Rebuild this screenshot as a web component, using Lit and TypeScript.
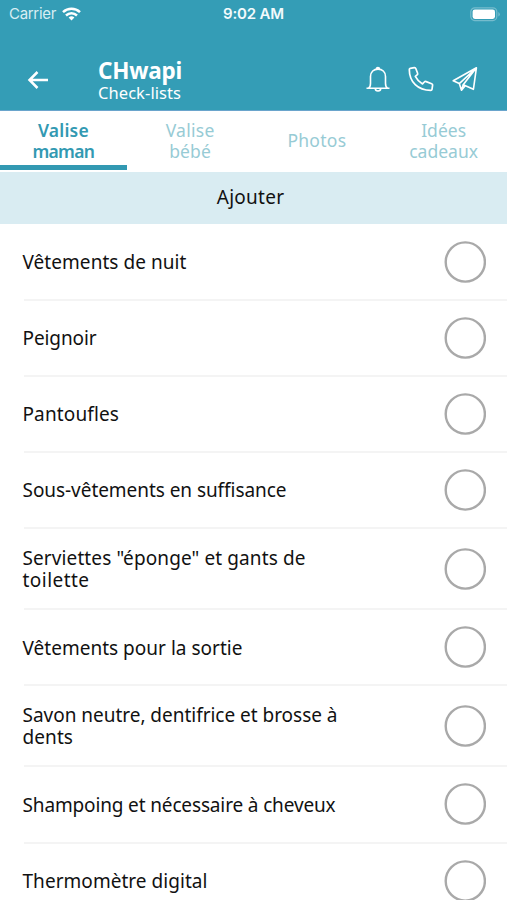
import { LitElement, html, css } from "lit";
import { customElement, property } from "lit/decorators.js";

/** A line of text whose tracking is adjusted so it spans a given width. */
@customElement("fit-text")
class FitText extends LitElement {
  @property() text = "";
  @property({ type: Number }) span = 0;

  static styles = css`
    :host { display: block; white-space: nowrap; }
    .line { display: block; width: max-content; }
  `;

  updated() {
    const line = this.renderRoot.querySelector(".line") as HTMLElement;
    line.style.letterSpacing = "0";
    const natural = line.getBoundingClientRect().width;
    const step = (this.span - natural) / this.text.length;
    line.style.letterSpacing = `${step}px`;
  }

  render() {
    return html`<span class="line">${this.text}</span>`;
  }
}

type Line = [string, number];

const tabs: Line[][] = [
  [["Valise", 51], ["maman", 62]],
  [["Valise", 49], ["bébé", 42]],
  [["Photos", 59]],
  [["Idées", 45], ["cadeaux", 69]],
];

const items: Line[][] = [
  [["Vêtements de nuit", 164]],
  [["Peignoir", 74]],
  [["Pantoufles", 96.5]],
  [["Sous-vêtements en suffisance", 264]],
  [['Serviettes "éponge" et gants de', 283], ["toilette", 67]],
  [["Vêtements pour la sortie", 220]],
  [["Savon neutre, dentifrice et brosse à", 315], ["dents", 50.5]],
  [["Shampoing et nécessaire à cheveux", 313]],
  [["Thermomètre digital", 185]],
];

const lines = (ls: Line[]) => ls.map(([t, w]) => html`<fit-text .text=${t} .span=${w}></fit-text>`);

@customElement("app-root")
class AppRoot extends LitElement {
  static styles = css`
    :host {
      display: block;
      height: 900px;
      overflow: hidden;
      background: #fff;
      color: #111;
      font-family: "Noto Sans", "Open Sans", sans-serif;
    }
    .header {
      box-sizing: border-box;
      height: 111px;
      background: #349db6;
      border-bottom: 1px solid #6aa5cc;
      color: #fff;
    }
    .status {
      display: grid;
      grid-template-columns: 1fr auto 1fr;
      align-items: center;
      height: 28px;
      padding: 0 6px 0 9px;
      font: 15px/28px Inter, sans-serif;
    }
    .carrier { display: flex; align-items: center; gap: 6px; color: #d8eef3; }
    .clock { font-weight: 600; color: #f2fafc; margin-right: 3px; }
    .battery { justify-self: end; }
    svg { display: block; }
    .bar { display: flex; align-items: center; height: 82px; }
    .back { margin: 21px 0 0 27px; width: 71px; }
    .titles { flex: 1; padding-top: 23px; }
    .title { font-weight: 700; font-size: 22.5px; line-height: 24px; }
    .sub { font-size: 16.5px; line-height: 20px; }
    .actions { display: flex; gap: 16px; padding: 20px 28px 0 0; }
    .tabs {
      display: grid;
      grid-template-columns: repeat(4, 1fr);
      height: 61px;
      font-size: 17.5px;
      line-height: 21px;
      color: #97cbd5;
    }
    .tab {
      box-sizing: border-box;
      display: flex;
      flex-direction: column;
      align-items: center;
      justify-content: center;
      padding-top: 5px;
      border-bottom: 5px solid transparent;
      margin-bottom: 2px;
    }
    .tab.active { color: #3299b2; font-weight: 600; border-color: #3299b2; }
    .add {
      display: flex;
      align-items: center;
      justify-content: center;
      box-sizing: border-box;
      height: 52px;
      padding: 0 6px 2px 0;
      background: #d9ecf2;
      font-size: 19px;
    }
    .list { padding-top: 0.6px; }
    .row {
      box-sizing: border-box;
      display: flex;
      align-items: center;
      justify-content: space-between;
      height: 76.1px;
      margin-left: 23.5px;
      padding-right: 21px;
      border-bottom: 2px solid #f4f4f4;
      font-size: 19px;
      line-height: 22px;
    }
    .row.tall { height: 81.2px; }
    .label { margin-left: -1px; padding-top: 1px; }
    .check { width: 42px; height: 42px; }
  `;

  render() {
    return html`
      <div class="header">
        <div class="status">
          <div class="carrier">
            <fit-text .text=${"Carrier"} .span=${47}></fit-text>
            <svg width="19" height="15" viewBox="0 0 19 15" fill="none" stroke="#fff" stroke-width="2.5">
              <path d="M1 5.2C5.8.7 13.200.7 18 5.200" />
              <path d="M4 8.500C7.200 5.500 11.800 5.500 15 8.500" />
              <path d="M6.600 10.400Q9.500 8.200 12.400 10.400L9.500 13.600Z" fill="#fff" stroke="none" />
            </svg>
          </div>
          <div class="clock"><fit-text .text=${"9:02 AM"} .span=${61}></fit-text></div>
          <svg class="battery" width="31" height="15" viewBox="0 0 31 15">
            <rect x=".8" y=".8" width="26" height="12.800" rx="4" fill="none" stroke="#75bccd" stroke-width="1.200" />
            <rect x="2.600" y="2.500" width="22.400" height="9.400" rx="2.300" fill="#fff" />
            <path d="M28.300 5v4.600q1.500-.7 1.500-2.300T28.300 5z" fill="#75bccd" />
          </svg>
        </div>
        <div class="bar">
          <div class="back">
            <svg width="22" height="20" viewBox="0 0 22 20" fill="none" stroke="#fff" stroke-width="2.500">
              <path d="M10.500 2L2.500 10l8 8M2.500 10H21" />
            </svg>
          </div>
          <div class="titles">
            <fit-text class="title" .text=${"CHwapi"} .span=${84}></fit-text>
            <fit-text class="sub" .text=${"Check-lists"} .span=${83}></fit-text>
          </div>
          <div class="actions">
            <svg width="26" height="28" viewBox="0 0 26 28" fill="none" stroke="#fff" stroke-width="1.600">
              <path d="M1.500 23.300h23M3.500 23.300c1.600-1 2-2 2-5V11.500c0-4.800 3.400-7.400 7.500-7.400s7.500 2.600 7.500 7.400v6.800c0 3 .4 4 2 5M11.300 4.200a1.700 1.700 0 0 1 3.400 0M10.300 23.500a2.700 2.500 0 0 0 5.400 0" />
            </svg>
            <svg width="28" height="28" viewBox="0 0 28 28" fill="none" stroke="#fff" stroke-width="1.700" stroke-linejoin="round">
              <path d="M3.200 3.300L7.300 2.700Q8.500 2.600 8.900 3.700L10.600 8.200Q11 9.200 10.100 9.900L8.300 11.400Q10.700 16.200 15.500 18.900L17.300 17Q18.100 16.200 19.100 16.600L24.700 18.700Q25.800 19.100 25.600 20.200L25 24.300Q24.800 25.300 23.800 25.300C11 25.300 2.300 17 2.300 4.400Q2.300 3.500 3.200 3.300Z" />
            </svg>
            <svg width="28" height="28" viewBox="0 0 28 28" fill="none" stroke="#fff" stroke-width="1.600" stroke-linejoin="round">
              <path d="M25.400 2.800L2.200 15.800 8.300 18.600 25.400 2.800 12.200 19.800 22.400 24.300ZM8.300 18.600L10.500 25.300 14 21M10.500 25.300L12.200 19.800" />
            </svg>
          </div>
        </div>
      </div>
      <div class="tabs">
        ${tabs.map((t, i) => html`<div class="tab ${i === 0 ? "active" : ""}">${lines(t)}</div>`)}
      </div>
      <div class="add"><fit-text .text=${"Ajouter"} .span=${67.5}></fit-text></div>
      <div class="list">
        ${items.map((it) => html`
          <div class="row ${it.length > 1 ? "tall" : ""}">
            <div class="label">${lines(it)}</div>
            <svg class="check" viewBox="0 0 42 42">
              <circle cx="21.300" cy="21" r="19.600" fill="none" stroke="#a9a9a9" stroke-width="2.400" />
            </svg>
          </div>`)}
      </div>
    `;
  }
}
